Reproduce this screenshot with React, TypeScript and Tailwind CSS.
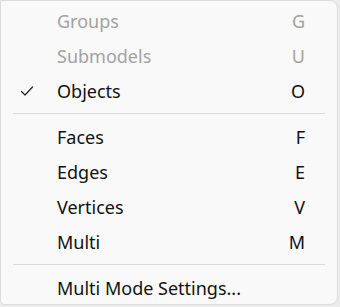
import React from 'react';

type Item = { label: string; key?: string; disabled?: boolean; checked?: boolean };

const groups: Item[][] = [
  [
    { label: 'Groups', key: 'G', disabled: true },
    { label: 'Submodels', key: 'U', disabled: true },
    { label: 'Objects', key: 'O', checked: true },
  ],
  [
    { label: 'Faces', key: 'F' },
    { label: 'Edges', key: 'E' },
    { label: 'Vertices', key: 'V' },
    { label: 'Multi', key: 'M' },
  ],
  [{ label: 'Multi Mode Settings...' }],
];

function Check() {
  return (
    <svg width="14" height="12" viewBox="0 0 14 12" fill="none" aria-hidden>
      <path d="M1.5 6.5 L5 10 L12.5 2" stroke="#222" strokeWidth="1.2" strokeLinecap="round" strokeLinejoin="round" />
    </svg>
  );
}

function Row({ item }: { item: Item }) {
  return (
    <div className={`flex h-[35px] items-center pr-[32px] ${item.disabled ? 'text-[#a2a2a2]' : 'text-[#111]'}`}>
      <div className="flex w-[56px] shrink-0 items-center pl-[19px]">{item.checked && <Check />}</div>
      <div className="flex-1">{item.label}</div>
      {item.key && <div>{item.key}</div>}
    </div>
  );
}

export default function App() {
  return (
    <div className="h-[307px] w-[340px] bg-[#ececec]">
      <div
        className="h-[305px] w-[338px] rounded-r-lg rounded-bl-sm border border-[#dcdcdc] bg-[#f9f9f9] pt-[2px] text-[18px] leading-none"
        style={{ fontFamily: '"Noto Sans", "Open Sans", sans-serif' }}
      >
        {groups.map((g, i) => (
          <div key={i}>
            {i > 0 && <div className="mx-[12px] my-[5px] h-px bg-[#d9d9d9]" />}
            {g.map((item) => (
              <Row key={item.label} item={item} />
            ))}
          </div>
        ))}
      </div>
    </div>
  );
}
